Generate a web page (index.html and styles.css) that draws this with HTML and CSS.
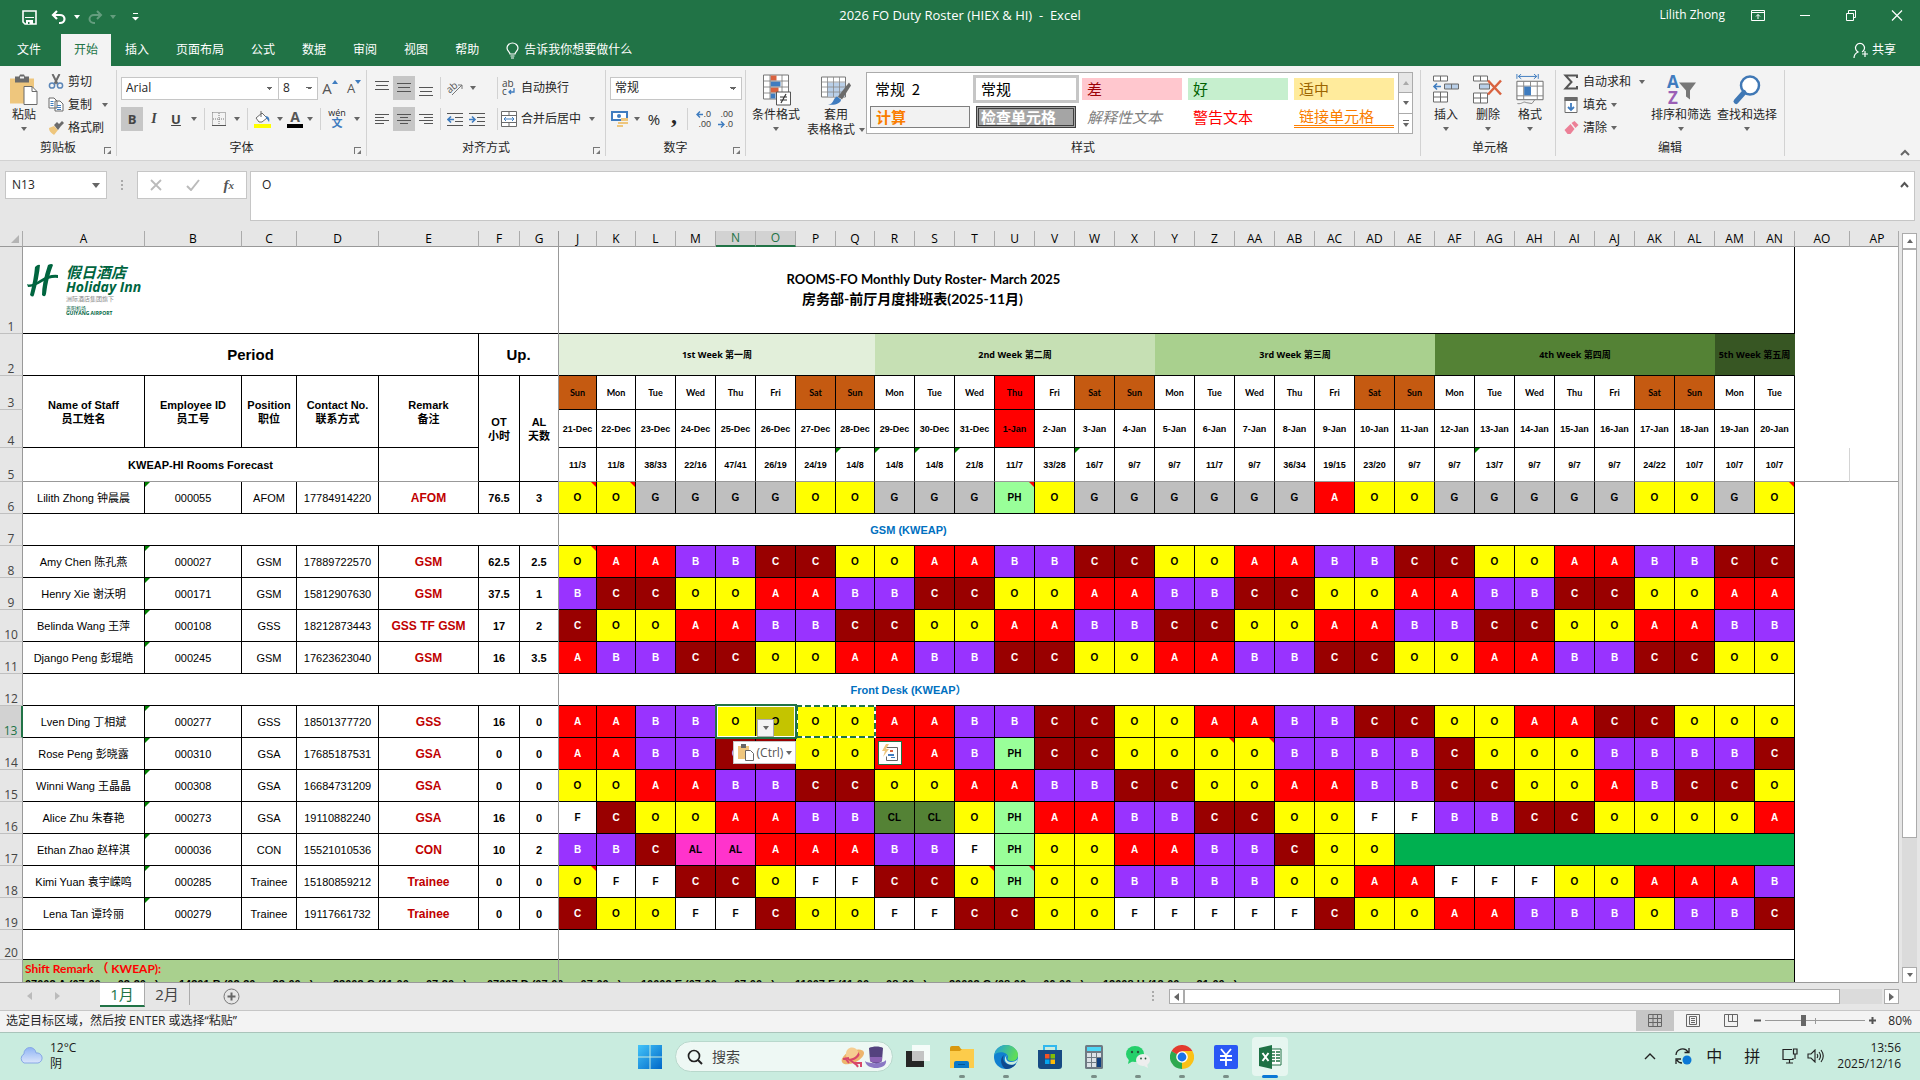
FILE: index.html
```html
<!DOCTYPE html>
<html lang="zh-CN">
<head>
<meta charset="utf-8">
<title>2026 FO Duty Roster (HIEX &amp; HI) - Excel</title>
<link rel="stylesheet" href="styles.css">
</head>
<body>
<header class="titlebar">
  <div class="quick">
    <button class="tb" aria-label="保存"><svg width="15" height="15" viewBox="0 0 15 15"><path d="M1 1h13v13H3l-2-2z" fill="none" stroke="#fff" stroke-width="1.6"/><path d="M3 8h9v-1H3zM4 10h7v4H4z" fill="#fff"/><path d="M6 12h1.500v2H6z" fill="#217346"/></svg></button>
    <button class="tb" aria-label="撤消"><svg width="16" height="15" viewBox="0 0 16 15"><path d="M2 5h7a4.500 4 0 0 1 0 8H8M6 1L2 5l4 4" fill="none" stroke="#fff" stroke-width="2.200"/></svg></button>
    <i class="dd white"></i>
    <button class="tb dim" aria-label="恢复"><svg width="16" height="15" viewBox="0 0 16 15"><path d="M14 5H7a4.500 4 0 0 0 0 8h1M10 1l4 4-4 4" fill="none" stroke="#fff" stroke-width="2"/></svg></button>
    <i class="dd white dim"></i>
    <button class="tb custom" aria-label="自定义"><svg width="7" height="8" viewBox="0 0 7 8"><path d="M1 .5h5" stroke="#fff"/><path d="M0 4h7L3.500 7.500z" fill="#fff"/></svg></button>
  </div>
  <h1>2026 FO Duty Roster (HIEX &amp; HI)&nbsp; -&nbsp; Excel</h1>
  <div class="wins">
    <span class="user">Lilith Zhong</span>
    <button class="tb" aria-label="功能区显示选项"><svg width="14" height="11" viewBox="0 0 14 11"><path d="M.5.5h13v10H.5zM.5 2.500h13M7 9V4.500M5 6.500l2-2 2 2" fill="none" stroke="#fff"/></svg></button>
    <button class="tb" aria-label="最小化"><svg width="12" height="11" viewBox="0 0 12 11"><path d="M1 5.500h10" stroke="#fff"/></svg></button>
    <button class="tb" aria-label="还原"><svg width="12" height="11" viewBox="0 0 12 11"><path d="M1.500 3.500h7v7h-7zM3.500 3V.5h7v7H9" fill="none" stroke="#fff"/></svg></button>
    <button class="tb" aria-label="关闭"><svg width="12" height="11" viewBox="0 0 12 11"><path d="M1 .5l10 10M11 .5l-10 10" stroke="#fff" stroke-width="1.200"/></svg></button>
  </div>
</header>
<nav class="tabs">
  <a href="#" class="file">文件</a><a href="#" class="on">开始</a><a href="#">插入</a><a href="#">页面布局</a><a href="#">公式</a><a href="#">数据</a><a href="#">审阅</a><a href="#">视图</a><a href="#">帮助</a>
  <a href="#" class="tell"><svg width="13" height="17" viewBox="0 0 13 17"><path d="M4 12c0-2-3-3-3-6a5.500 5 0 0 1 11 0c0 3-3 4-3 6zM4.500 14h4M5 16h3" fill="none" stroke="#fff" stroke-width="1.200"/></svg>告诉我你想要做什么</a>
  <a href="#" class="share"><svg width="16" height="17" viewBox="0 0 16 17"><path d="M1 16c0-4 2-5 4-6a4.500 4.500 0 1 1 4 0M9 12h6M12 9v6" fill="none" stroke="#fff" stroke-width="1.200"/></svg>共享</a>
</nav>

<section class="ribbon">
  <div class="group clip">
    <div class="gbody">
      <button class="big paste"><svg width="30" height="31" viewBox="0 0 30 31"><path d="M1 4h24v25H1z" fill="#eec67d"/><path d="M6 2h4l1-2h4l1 2h4v6H6z" fill="#6b6b6b"/><path d="M11 3h4" stroke="#f3f3f3" stroke-width="2"/><path d="M15 12h8l5 5v13H15z" fill="#fff" stroke="#6b6b6b"/><path d="M23 12v5h5" fill="none" stroke="#6b6b6b"/></svg>粘贴<i class="dd"></i></button>
      <div class="stack">
        <button class="sm"><svg width="15" height="15" viewBox="0 0 15 15"><path d="M4 0l5 10M11 0L6 10" stroke="#6b6b6b" stroke-width="2"/><circle cx="3.500" cy="11.500" r="2.600" fill="none" stroke="#5b86b8" stroke-width="1.500"/><circle cx="11.500" cy="11.500" r="2.600" fill="none" stroke="#5b86b8" stroke-width="1.500"/></svg>剪切</button>
        <button class="sm"><svg width="16" height="15" viewBox="0 0 16 15"><path d="M1 1h5l3 3v7H1zM7 4h5l3 3v7H7z" fill="#fff" stroke="#6b6b6b"/><path d="M2.500 4.500h3M2.500 6.500h3M2.500 8.500h3M9 8.500h4M9 10.500h4M9 12.500h4" stroke="#3f7cbf"/></svg>复制 <i class="dd far"></i></button>
        <button class="sm"><svg width="16" height="14" viewBox="0 0 16 14"><path d="M1 7l5-2 4 4-4 5C4 12 1 11 1 7z" fill="#eec67d"/><path d="M6 4l3-3 2 2 3-3 2 2-3 3-3 4z" fill="#6b6b6b"/></svg>格式刷</button>
      </div>
    </div>
    <div class="glabel">剪贴板<i class="launch"></i></div>
  </div>

  <div class="group font">
    <div class="gbody rows">
      <div class="row">
        <select class="fname" aria-label="字体"><option>Arial</option></select><select class="fsize" aria-label="字号"><option>8</option></select>
        <button class="ic up" aria-label="增大字号">A<i class="tri"></i></button>
        <button class="ic dn" aria-label="减小字号">A<i class="tri"></i></button>
      </div>
      <div class="row">
        <button class="ic press b" aria-label="加粗">B</button>
        <button class="ic i" aria-label="倾斜">I</button>
        <button class="ic u" aria-label="下划线">U</button><i class="dd"></i>
        <i class="sep"></i>
        <button class="ic" aria-label="边框"><svg width="14" height="14" viewBox="0 0 14 14"><path d="M.5.5h13v13M.5.5v13M7 1v12M1 7h12" fill="none" stroke="#777" stroke-dasharray="1 1"/><path d="M0 13.500h14" stroke="#555"/></svg></button><i class="dd"></i>
        <i class="sep"></i>
        <button class="ic" aria-label="填充颜色"><svg width="17" height="17" viewBox="0 0 17 17"><path d="M2 7l6-5 5 5-5 4H5z" fill="#fff" stroke="#6b6b6b"/><path d="M7 0v6" stroke="#6b6b6b"/><path d="M11 5c4 0 5 3 4 6l-2-3z" fill="#3f7cbf"/><path d="M0 13h17v4H0z" fill="#ff0"/></svg></button><i class="dd"></i>
        <button class="ic fc" aria-label="字体颜色">A</button><i class="dd"></i>
        <i class="sep"></i>
        <button class="ic wen" aria-label="拼音">wén<b>文</b></button><i class="dd"></i>
      </div>
    </div>
    <div class="glabel">字体<i class="launch"></i></div>
  </div>

  <div class="group align">
    <div class="gbody rows">
      <div class="row">
        <button class="ic" aria-label="顶端对齐"><svg class="al top" width="14" height="16"><path d="M0 1.500h14M1 5.500h12M0 9.500h14"/></svg></button>
        <button class="ic press" aria-label="垂直居中"><svg class="al" width="14" height="16"><path d="M0 3.500h14M1 7.500h12M0 11.500h14"/></svg></button>
        <button class="ic" aria-label="底端对齐"><svg class="al" width="14" height="16"><path d="M0 7.500h14M1 11.500h12M0 15.500h14"/></svg></button>
        <i class="sep"></i>
        <button class="ic" aria-label="方向"><svg width="17" height="16" viewBox="0 0 17 16"><text x="0" y="11" font-size="10" transform="rotate(-40 5 9)" fill="#555">ab</text><path d="M5 15L15 5M11 5h4v4" fill="none" stroke="#777"/></svg></button><i class="dd"></i>
        <i class="sep tall"></i>
        <button class="sm wide"><svg width="16" height="16" viewBox="0 0 16 16"><text x="1" y="7" font-size="10" fill="#444">ab</text><text x="1" y="15" font-size="10" fill="#444">c</text><path d="M13 8v4H8M10 10l-2 2 2 2" fill="none" stroke="#3f7cbf" stroke-width="1.300"/></svg>自动换行</button>
      </div>
      <div class="row">
        <button class="ic" aria-label="左对齐"><svg class="al" width="14" height="12"><path d="M0 1.500h14M0 4.500h9M0 7.500h14M0 10.500h9"/></svg></button>
        <button class="ic press" aria-label="居中"><svg class="al" width="14" height="12"><path d="M0 1.500h14M3 4.500h8M0 7.500h14M3 10.500h8"/></svg></button>
        <button class="ic" aria-label="右对齐"><svg class="al" width="14" height="12"><path d="M0 1.500h14M5 4.500h9M0 7.500h14M5 10.500h9"/></svg></button>
        <i class="sep"></i>
        <button class="ic" aria-label="减少缩进"><svg class="al" width="16" height="13"><path d="M0 .5h16M8 4.500h8M8 8.500h8M0 12.500h16"/><path class="mv" d="M1 6.500h6M4 3.500l-3 3 3 3"/></svg></button>
        <button class="ic" aria-label="增加缩进"><svg class="al" width="16" height="13"><path d="M0 .5h16M8 4.500h8M8 8.500h8M0 12.500h16"/><path class="mv" d="M0 6.500h6M3 3.500l3 3-3 3"/></svg></button>
        <i class="sep tall"></i>
        <button class="sm wide"><svg width="16" height="16" viewBox="0 0 16 16"><path d="M.5.500h15v15H.5zM.5 4.500h15M.5 11.500h15M8 .5v4M8 11.500v4" fill="#fff" stroke="#6b6b6b"/><path d="M3 8h10M5 6L3 8l2 2M11 6l2 2-2 2" fill="none" stroke="#3f7cbf"/></svg>合并后居中<i class="dd far"></i></button>
      </div>
    </div>
    <div class="glabel">对齐方式<i class="launch"></i></div>
  </div>

  <div class="group number">
    <div class="gbody rows">
      <div class="row"><select class="nfmt" aria-label="数字格式"><option>常规</option></select></div>
      <div class="row">
        <button class="ic" aria-label="会计格式"><svg width="18" height="17" viewBox="0 0 18 17"><path d="M1 1h15v8H1z" fill="#fff" stroke="#3f7cbf" stroke-width="2"/><circle cx="8" cy="5" r="2" fill="#3f7cbf"/><path d="M10 7h7v3h-7zM7 11h7v2H7zM6 14h6v2H6zM11 11h6v2h-6z" fill="#eec67d"/></svg></button><i class="dd"></i>
        <button class="ic pct" aria-label="百分比">%</button>
        <button class="ic comma" aria-label="千位分隔">,</button>
        <i class="sep"></i>
        <button class="ic dec" aria-label="增加小数位"><span><svg width="7" height="7" viewBox="0 0 7 7"><path d="M1 3.500h6M4 .5l-3 3 3 3" fill="none" stroke="#3f7cbf" stroke-width="1.400"/></svg>.0</span><span>.00</span></button>
        <button class="ic dec" aria-label="减少小数位"><span>.00</span><span><svg width="7" height="7" viewBox="0 0 7 7"><path d="M0 3.500h6M3 .5l3 3-3 3" fill="none" stroke="#3f7cbf" stroke-width="1.400"/></svg>.0</span></button>
      </div>
    </div>
    <div class="glabel">数字<i class="launch"></i></div>
  </div>

  <div class="group styles">
    <div class="gbody">
      <button class="big cond"><svg width="29" height="31" viewBox="0 0 29 31"><path d="M1.500.5h25v24h-25z" fill="#fff" stroke="#777"/><path d="M8.500 1h6v5h-6zM8.500 13h8v5h-8z" fill="#d9623f"/><path d="M8.500 7h10v5h-10zM8.500 19h5v5h-5z" fill="#3f7cbf"/><path d="M1.500 6.500h25M1.500 12.500h25M1.500 18.500h25M8 .5v24M20 .5v24" stroke="#777" stroke-width=".8"/><path d="M14.500 17.500h14v13h-14z" fill="#fff" stroke="#555"/><path d="M18 22.500h7M18 25.500h7M24 19.500l-5 9" stroke="#333" stroke-width="1.200"/></svg>条件格式<i class="dd"></i></button>
      <button class="big tbl"><svg width="30" height="31" viewBox="0 0 30 31"><path d="M.5 2.500h24v20H.5z" fill="#fff" stroke="#777"/><path d="M6 8h18v14H6z" fill="#b9cfe8"/><path d="M.5 7.500h24M.5 12.500h24M.5 17.500h24M6.500 2.500v20M12.500 2.500v20M18.500 2.500v20" stroke="#888" stroke-width=".8"/><path d="M28 8l2 3-9 14-4-3z" fill="#6b6b6b"/><path d="M7 30c6 0 5-7 9-8l4 3c0 4-6 6-13 5z" fill="#3f7cbf"/></svg>套用<span>表格格式<i class="dd"></i></span></button>
      <div class="gallery">
        <div class="cells">
          <button class="st plain">常规&nbsp; 2</button><button class="st sel">常规</button><button class="st bad">差</button><button class="st good">好</button><button class="st mid">适中</button>
          <button class="st calc">计算</button><button class="st chk">检查单元格</button><button class="st expl">解释性文本</button><button class="st warn">警告文本</button><button class="st lnk">链接单元格</button>
        </div>
        <div class="gscroll"><button aria-label="上"><i class="dd flip"></i></button><button aria-label="下"><i class="dd"></i></button><button aria-label="更多"><i class="bar"></i><i class="dd"></i></button></div>
      </div>
    </div>
    <div class="glabel">样式</div>
  </div>

  <div class="group cellsg">
    <div class="gbody">
      <button class="big c3"><svg width="28" height="31" viewBox="0 0 28 31"><path d="M1.500 1.500h14v5h-14zM8.500 1.500v5M1.500 17.500h14v10h-14zM8.500 17.500v10M1.500 22.500h14" fill="#fff" stroke="#6b6b6b"/><path d="M12.500 9.500h14v5h-14zM19.500 9.500v5" fill="#b9cfe8" stroke="#6b6b6b"/><path d="M2 12h7M5 9l-3 3 3 3" fill="none" stroke="#3f7cbf" stroke-width="1.600"/></svg>插入<i class="dd"></i></button>
      <button class="big c3"><svg width="30" height="31" viewBox="0 0 30 31"><path d="M.5 1.500h14v5H.5zM7.500 1.500v5M.5 18.500h14v10H.5zM7.500 18.500v10M.5 23.500h14" fill="#fff" stroke="#6b6b6b"/><path d="M6.500 9.500h10v5h-10z" fill="#b9cfe8" stroke="#6b6b6b"/><path d="M15 6l13 14M28 6L15 20" stroke="#d9623f" stroke-width="2.500"/></svg>删除<i class="dd"></i></button>
      <button class="big c3"><svg width="30" height="33" viewBox="0 0 30 33"><path d="M1.500 0v5M23.500 0v5M3 2.500h19M6 0L3 2.500 6 5M19 0l3 2.500L19 5" fill="none" stroke="#3f7cbf"/><path d="M1.500 7.500h27v19h-27z" fill="#fff" stroke="#6b6b6b"/><path d="M1.500 12.500h27M1.500 22.500h27M8.500 7.500v19M15.500 7.500v5M22.500 7.500v19M2 30.500c5 1 6-3 9-1l6 1 3-4" fill="none" stroke="#888"/><path d="M9 13h7v9H9z" fill="#3f7cbf"/></svg>格式<i class="dd"></i></button>
    </div>
    <div class="glabel">单元格</div>
  </div>

  <div class="group edit">
    <div class="gbody">
      <div class="stack">
        <button class="sm"><svg width="15" height="16" viewBox="0 0 15 16"><path d="M13.500 4V1.500H2L8 8l-6 6.500h11.500V12" fill="none" stroke="#555" stroke-width="2"/></svg>自动求和 <i class="dd far"></i></button>
        <button class="sm"><svg width="15" height="16" viewBox="0 0 15 16"><path d="M1.500.5h12v15h-12z" fill="#fff" stroke="#6b6b6b"/><path d="M1 0h13v4H1z" fill="#6b6b6b"/><path d="M7.500 6v7M4.500 10l3 3 3-3" fill="none" stroke="#3f7cbf" stroke-width="1.800"/></svg>填充<i class="dd"></i></button>
        <button class="sm"><svg width="15" height="14" viewBox="0 0 15 14"><path d="M8 2l3-2 4 4-3 3z" fill="#ec8097"/><path d="M7 3l4 5-4 5H4L1 9z" fill="#ec8097"/></svg>清除<i class="dd"></i></button>
      </div>
      <button class="big e2"><svg width="31" height="31" viewBox="0 0 31 31"><text x="1" y="13" font-size="17" font-weight="bold" fill="#3f7cbf">A</text><text x="2" y="29" font-size="17" font-weight="bold" fill="#9b5fb5">Z</text><path d="M13 8h17l-6 8v9l-4-3v-6z" fill="#777"/></svg>排序和筛选<i class="dd"></i></button>
      <button class="big e2"><svg width="30" height="31" viewBox="0 0 30 31"><circle cx="18" cy="11" r="9" fill="#fff" stroke="#4078b5" stroke-width="2.500"/><path d="M12 18L4 27" stroke="#4078b5" stroke-width="5" stroke-linecap="round"/></svg>查找和选择<i class="dd"></i></button>
    </div>
    <div class="glabel">编辑</div>
  </div>
  <button class="collapse" aria-label="折叠功能区"><svg width="10" height="7" viewBox="0 0 10 7"><path d="M1 6l4-4 4 4" fill="none" stroke="#666" stroke-width="2"/></svg></button>
</section>

<section class="fbar">
  <div class="namebox"><input value="N13" aria-label="名称框"><i class="dd big-dd"></i></div>
  <i class="dots"></i>
  <div class="fbtns">
    <button aria-label="取消"><svg width="12" height="12"><path d="M1 1l10 10M11 1L1 11" stroke="#bbb" stroke-width="1.800"/></svg></button>
    <button aria-label="输入"><svg width="14" height="12"><path d="M1 7l4 4 8-10" fill="none" stroke="#bbb" stroke-width="2"/></svg></button>
    <button class="fx" aria-label="插入函数">f<small>x</small></button>
  </div>
  <div class="formula"><textarea aria-label="编辑栏">O</textarea><svg width="9" height="7" viewBox="0 0 9 7"><path d="M1 6l3.500-4L8 6" fill="none" stroke="#555" stroke-width="2"/></svg></div>
</section>

<main class="sheet">
  <div class="pane">
    <table id="roster" aria-label="Duty Roster"></table>
    <div class="freeze"></div>
    <div class="logo">
      <svg width="32" height="34" viewBox="0 0 32 34"><path d="M8 3q3-3 5-2-1 12-6 30-1 3-4 0Q7 15 8 3zM21 1q4-2 5 0-5 12-7 29-1 4-4 1 0-12 6-30z" fill="#00653f"/><path d="M0 20q4 2 13-4t18-5v3q-8-1-16 4T1 23z" fill="#00653f"/></svg>
      <div><b class="cn">假日酒店</b><b class="en">Holiday Inn</b><span class="g">洲际酒店集团旗下</span><span class="p">贵阳机场</span><b class="p">GUIYANG AIRPORT</b></div>
    </div>
  </div>
  <div class="vscroll"><button aria-label="上"><i class="dd flip"></i></button><div class="track"><i class="thumb"></i></div><button aria-label="下"><i class="dd"></i></button></div>
</main>

<section class="sheetbar">
  <button class="nav" aria-label="上一张"><svg width="5" height="8"><path d="M5 0v8L0 4z" fill="#bbb"/></svg></button>
  <button class="nav" aria-label="下一张"><svg width="5" height="8"><path d="M0 0v8l5-4z" fill="#bbb"/></svg></button>
  <a href="#" class="stab on">1月</a><a href="#" class="stab">2月</a>
  <button class="add" aria-label="新工作表"><svg width="17" height="17" viewBox="0 0 17 17"><circle cx="8.500" cy="8.500" r="7.500" fill="none" stroke="#777"/><path d="M8.500 4.500v8M4.500 8.500h8" stroke="#666" stroke-width="2"/></svg></button>
  <i class="dots"></i>
  <div class="hscroll"><button aria-label="左"><svg width="5" height="8"><path d="M5 0v8L0 4z" fill="#666"/></svg></button><div class="track"><i class="thumb"></i></div><button aria-label="右"><svg width="5" height="8"><path d="M0 0v8l5-4z" fill="#666"/></svg></button></div>
</section>

<footer class="status">
  <span>选定目标区域，然后按 ENTER 或选择“粘贴”</span>
  <div class="views">
    <button class="on" aria-label="普通"><svg width="14" height="13"><path d="M.5.5h13v12H.5zM.5 4.500h13M.5 8.500h13M5 .5v12M9.500 .5v12" fill="none" stroke="#666"/></svg></button>
    <button aria-label="页面布局"><svg width="14" height="13"><path d="M.5.5h13v12H.5zM3.500 2.500h7v8h-7zM5 4.500h4M5 6.500h4M5 8.500h4" fill="none" stroke="#666"/></svg></button>
    <button aria-label="分页预览"><svg width="14" height="13"><path d="M.5.5h13v12H.5zM4.500 .5v7h4v-7M4.500 7.500h9" fill="none" stroke="#666"/></svg></button>
  </div>
  <button class="zm" aria-label="缩小"><svg width="7" height="9"><path d="M0 4.500h7" stroke="#555" stroke-width="2"/></svg></button>
  <input class="zoom" type="range" min="0" max="100" value="38" aria-label="缩放">
  <button class="zm" aria-label="放大"><svg width="7" height="9"><path d="M0 4.500h7M3.500 1v7" stroke="#555" stroke-width="2"/></svg></button>
  <span class="pc">80%</span>
</footer>

<section class="taskbar">
  <div class="weather"><svg width="24" height="17" viewBox="0 0 24 17"><defs><linearGradient id="cl" x1="0" y1="0" x2="0" y2="1"><stop offset="0" stop-color="#8fb4f4"/><stop offset="1" stop-color="#dbe6fb"/></linearGradient></defs><path d="M5 16a5 5 0 0 1 0-9 6 6 0 0 1 12-1 5 5 0 0 1 2 10z" fill="url(#cl)" stroke="#86a7e6"/></svg><p>12°C<br>阴</p></div>
  <div class="apps">
    <button aria-label="开始"><svg width="24" height="24"><defs><linearGradient id="w" x1="0" y1="0" x2="1" y2="1"><stop offset="0" stop-color="#43c4f9"/><stop offset="1" stop-color="#0067c8"/></linearGradient></defs><path d="M0 0h11.500v11.500H0zM12.500 0H24v11.500H12.500zM0 12.500h11.500V24H0zM12.500 12.500H24V24H12.500z" fill="url(#w)"/></svg></button>
    <label class="search"><svg width="16" height="16" viewBox="0 0 16 16"><circle cx="7" cy="7" r="5.500" fill="none" stroke="#222" stroke-width="1.700"/><path d="M11 11l4 4" stroke="#222" stroke-width="2"/></svg><input placeholder="搜索" aria-label="搜索">
      <svg width="46" height="24" viewBox="0 0 46 24"><g transform="rotate(-25 11 10)"><ellipse cx="11" cy="12" rx="12" ry="6" fill="#edb56d"/><path d="M5 11c0-11 13-11 13-1-3 4-9 4-13 1z" fill="#f6cd91"/><path d="M5 11c3 3 10 3 13-1v3c-3 3-10 3-13 0z" fill="#d8486a"/></g><path d="M4 13l4 5M2 14l6-1M9 15l8 6M17 22l-3-4 6 0 0 4" stroke="#d8486a" stroke-width="2" fill="none"/><path d="M24 16c3 3 18 3 21-1 1 6-5 8-10 8s-10-2-11-7z" fill="#8b78c4"/><path d="M28 3c4-2 11-2 14 0l-1 13c-3 3-9 3-12 0z" fill="#54427e"/><path d="M29 12h12v4c-3 2-9 2-12 0z" fill="#8b63b4"/></svg></label>
    <button aria-label="任务视图"><svg width="24" height="23"><path d="M0 6h18v16H0z" fill="#262626"/><path d="M6 0h18v16H6z" fill="#fff" opacity=".82"/><path d="M6 6h12v10H6z" fill="#c4c4c4"/></svg></button>
    <button class="run" aria-label="文件资源管理器"><svg width="24" height="22"><path d="M0 2q0-2 2-2h7l2 3h11q2 0 2 2v6H0z" fill="#d9980f"/><path d="M0 5h10l2-2h12v19H0z" fill="#fccc4b"/><path d="M4 22v-5q0-2 2-2h11q2 0 2 2v5z" fill="#0c78c8"/><path d="M8 18.500h7" stroke="#045596"/></svg></button>
    <button class="run" aria-label="Edge"><svg width="24" height="24" viewBox="0 0 24 24"><defs><linearGradient id="e1" x1="0" y1="0" x2="1" y2=".3"><stop offset="0" stop-color="#1d9be3"/><stop offset="1" stop-color="#5fdc59"/></linearGradient></defs><circle cx="12" cy="12" r="12" fill="#1080d0"/><path d="M0 11C1 4 6 0 12 0c7 0 12 5 12 10 0 4-3 6-6 6-4 0-5-2-4-4C14 7 3 5 0 11z" fill="url(#e1)"/><path d="M10 10c-3 6 3 12 12 9-3 4-7 5-10 5C7 22 5 13 10 10z" fill="#114a8e"/><path d="M13 10c-2 2-1 7 4 7 3 0 5-1 7-3-1 5-6 7-10 5-4-2-4-7-1-9z" fill="#c9ecdf"/></svg></button>
    <button aria-label="Microsoft Store"><svg width="24" height="24"><path d="M6 5V1h12v4" fill="none" stroke="#31b8ee" stroke-width="2"/><path d="M0 5h24v16q0 3-3 3H3q-3 0-3-3z" fill="#164a83"/><path d="M7 9h4.500v4.500H7z" fill="#f35325"/><path d="M12.500 9H17v4.500h-4.500z" fill="#81bc06"/><path d="M7 14.500h4.500V19H7z" fill="#05a6f0"/><path d="M12.500 14.500H17V19h-4.500z" fill="#ffba08"/></svg></button>
    <button class="run" aria-label="计算器"><svg width="18" height="24"><rect width="18" height="24" rx="1.500" fill="#6e7a83"/><path d="M2 2h14v4H2z" fill="#4dd6f5"/><path d="M2 8h4v4H2zM7 8h4v4H7zM12 8h4v4h-4zM2 13h4v4H2zM7 13h4v4H7zM2 18h4v4H2zM7 18h4v4H7z" fill="#dbe1e6"/><path d="M12 13h4v9h-4z" fill="#103f80"/></svg></button>
    <button class="run" aria-label="微信"><svg width="24" height="22"><ellipse cx="9" cy="8" rx="9" ry="8" fill="#25cf6b"/><path d="M3 13l-1 5 5-3z" fill="#25cf6b"/><ellipse cx="17" cy="14" rx="7" ry="6" fill="#eee"/><path d="M21 18l1 4-4-2z" fill="#eee"/><g fill="#26543a"><circle cx="6" cy="6" r="1.200"/><circle cx="12" cy="6" r="1.200"/><circle cx="15" cy="12.500" r=".9"/><circle cx="19.500" cy="12.500" r=".9"/></g></svg></button>
    <button class="run" aria-label="Chrome"><svg width="24" height="24" viewBox="0 0 24 24"><path d="M12 12L1.600 6A12 12 0 0 1 22.400 6z" fill="#e33b2e"/><path d="M12 12h-.1L22.400 6A12 12 0 0 1 12 24z" fill="#fbc116"/><path d="M12 12v12A12 12 0 0 1 1.600 6z" fill="#2da94f"/><path d="M12 6h10.400l-6 8z" fill="#fbc116"/><path d="M1.600 6h10.400v6z" fill="#e33b2e"/><circle cx="12" cy="12" r="5.800" fill="#fff"/><circle cx="12" cy="12" r="4.400" fill="#1a73e8"/></svg></button>
    <button class="run" aria-label="支付"><svg width="24" height="24"><rect width="24" height="24" rx="2" fill="#2a57f5"/><path d="M7 4l5 6 5-6M12 10v11M6 11h12M6 15h12" fill="none" stroke="#fff" stroke-width="1.800"/></svg></button>
    <button class="run cur" aria-label="Excel"><svg width="24" height="24"><path d="M12 4h11v16H12z" fill="#fff" stroke="#217346"/><path d="M14 7h3M18 7h4M14 10h3M18 10h4M14 13h3M18 13h4M14 16h3M18 16h4" stroke="#217346" stroke-width="1.500"/><path d="M1 3l13-3v24L1 21z" fill="#1e7145"/><path d="M4.500 8l6 8M10.500 8l-6 8" stroke="#fff" stroke-width="2"/></svg></button>
  </div>
  <div class="tray">
    <svg width="12" height="8"><path d="M1 7l5-5 5 5" fill="none" stroke="#222" stroke-width="1.400"/></svg>
    <svg class="sync" width="18" height="18" viewBox="0 0 18 18"><path d="M2 8a6.500 6.500 0 0 1 12-3M15 1v4.500h-4.500M2 17v-5h5M3 13c1 2 3 3 5 3" fill="none" stroke="#222" stroke-width="1.300"/><circle cx="13" cy="13" r="4.500" fill="#0a78d6"/></svg>
    <span class="ime">中</span><span class="ime">拼</span>
    <svg class="mon" width="16" height="16" viewBox="0 0 16 16"><path d="M10 1.500H1v10h10V10M4 15h7M7.500 12v3M11.500 1h3.500v5h-3.500zM13 6v5" fill="none" stroke="#222" stroke-width="1.200"/></svg>
    <svg class="spk" width="17" height="14" viewBox="0 0 17 14"><path d="M1 5h3l4-4v12L4 9H1zM10 5q1.500 2 0 4M12 3q3 4 0 8M14 1q4.500 6 0 12" fill="none" stroke="#222" stroke-width="1.100"/></svg>
    <p>13:56<br>2025/12/16</p>
  </div>
</section>
<script src="roster.js"></script>
</body>
</html>
```
FILE: styles.css
```css
* { box-sizing: border-box; }
body {
  margin: 0;
  height: 100vh;
  display: flex;
  flex-direction: column;
  overflow: hidden;
  background: #e6e6e6;
  color: #262626;
  font: 12px/16px "Open Sans", "Noto Sans CJK SC", sans-serif;
}
button, input, select, textarea { font: inherit; color: inherit; }
button { border: 0; padding: 0; background: none; display: flex; align-items: center; justify-content: center; white-space: nowrap; }
a { color: inherit; text-decoration: none; }
svg { flex: none; display: block; }
i { font-style: normal; }
p { margin: 0; }

.dd { flex: none; width: 0; height: 0; border: 3px solid transparent; border-top: 4px solid #666; border-bottom: 0; }
.dd.white { border-top-color: #fff; }
.dd.flip { border-top: 0; border-bottom: 4px solid #aaa; }
.big-dd { border-width: 4px; border-top-width: 5px; border-bottom: 0; }
.dim { opacity: .3; }

/* title bar */
.titlebar { flex: none; height: 34px; display: grid; grid-template-columns: 1fr auto 1fr; align-items: center; background: #217346; color: #fff; }
.titlebar h1 { margin: 0; padding-bottom: 4px; font: inherit; font-size: 13px; }
.quick { display: flex; align-items: center; padding-left: 22px; gap: 7px; }
.quick .tb:nth-child(2) { margin-left: 7px; }
.quick .custom { margin-left: 9px; }
.wins { display: flex; align-items: center; justify-content: flex-end; gap: 34px; padding: 0 17px 4px 0; }
.user { margin-right: -8px; }

/* ribbon tabs */
.tabs { flex: none; height: 32px; display: flex; gap: 1px; padding-left: 4px; background: #217346; color: #fff; }
.tabs a { display: flex; align-items: center; padding: 0 13px; }
.tabs .file { margin-right: 6px; }
.tabs .on { background: #f3f3f3; color: #217346; }
.tabs .tell { gap: 5px; }
.tabs .share { margin-left: auto; gap: 3px; padding-right: 24px; }

/* ribbon */
.ribbon { flex: none; height: 95px; display: flex; position: relative; background: #f3f3f3; border-bottom: 1px solid #d2d2d2; padding-top: 4px; }
.group { height: 86px; border-right: 1px solid #d2d2d2; display: flex; flex-direction: column; }
.gbody { height: 71px; display: flex; }
.glabel { position: relative; text-align: center; line-height: 17px; }
.launch { position: absolute; right: 5px; bottom: 2px; width: 7px; height: 7px; border: solid #777; border-width: 1px 0 0 1px; }
.launch::after { content: ""; position: absolute; right: 0; bottom: 0; border: 2px solid transparent; border-right-color: #777; border-bottom-color: #777; }
.big { flex-direction: column; justify-content: flex-start; padding-top: 4px; }
.big svg { margin-bottom: 1px; height: 32px; }
.big .dd { margin-top: 4px; }
.big span { display: flex; align-items: center; gap: 4px; line-height: 14px; }
.big span .dd { margin-top: 0; }
.stack { display: flex; flex-direction: column; align-items: flex-start; }
.sm { height: 23px; gap: 4px; }
.sm svg { width: 16px; }
.sm .far { margin-left: 4px; }
.rows { flex-direction: column; padding: 6px 0 0 4px; gap: 7px; }
.row { height: 24px; display: flex; align-items: center; }
.ic { min-width: 22px; height: 24px; }
.press { background: #c6c6c6; }
.sep { width: 1px; height: 22px; background: #d2d2d2; }
.row > .dd { margin: 0 4px; }
.row > .sep { margin: 0 3px; }
.al { fill: none; stroke: #555; }
.mv { stroke: #3f7cbf; stroke-width: 1.6px; }

.clip { width: 117px; }
.clip .paste { width: 48px; }
.clip .far { margin-left: 6px; }
.font { width: 250px; }
select {
  appearance: none; height: 23px; padding: 0 4px; border: 1px solid #c6c6c6; border-radius: 0;
  background: linear-gradient(45deg, transparent 50%, #666 50%) no-repeat right 8px center / 3px 3px, linear-gradient(135deg, #666 50%, transparent 50%) no-repeat right 5px center / 3px 3px, #fff;
}
.fname { width: 158px; }
.fsize { width: 40px; margin-left: -1px; }
.nfmt { width: 132px; }
.up, .dn { position: relative; font-size: 15px; width: 24px; color: #555; }
.dn { font-size: 13px; }
.up .tri, .dn .tri { border: 3px solid transparent; border-top: 0; border-bottom: 4px solid #3f7cbf; align-self: flex-start; margin-top: 4px; }
.dn .tri { border-bottom: 0; border-top: 4px solid #3f7cbf; }
.b { font-weight: bold; font-size: 13px; color: #444; }
.i { font: italic bold 14px "Liberation Serif", serif; color: #444; }
.u { font-weight: bold; font-size: 13px; text-decoration: underline; color: #444; }
.fc { font-size: 14px; line-height: 14px; font-weight: bold; color: #555; }
.ic.fc { height: 18px; min-width: 16px; border-bottom: 4px solid #000; }
.wen { flex-direction: column; width: 26px; font-size: 9px; line-height: 8px; }
.wen b { font-size: 11px; line-height: 12px; color: #3f7cbf; }
.align { width: 239px; }
.align .tall { margin-left: auto; }
.align .wide { width: 104px; justify-content: flex-start; }
.number { width: 140px; }
.number .ic { min-width: 20px; }
.pct { font-size: 15px; }
.comma { font: bold 24px/10px "Liberation Serif", serif; padding-bottom: 8px; }
.number .dec { width: 22px; flex-direction: column; font: 9px/10px "Liberation Sans", sans-serif; color: #444; }
.dec span { align-self: flex-end; display: flex; align-items: center; padding-right: 2px; }
.styles { width: 675px; }
.cond { width: 60px; }
.tbl { width: 60px; }
.gallery { height: 62px; margin-top: 2px; display: flex; border: 1px solid #ababab; background: #fff; }
.cells { display: grid; grid-template-columns: repeat(5, 100px); gap: 6px; padding: 5px 4px 5px 3px; }
.st { height: 22px; justify-content: flex-start; padding-left: 5px; font: 15px/20px "Noto Sans CJK SC", sans-serif; color: #000; }
.sel { outline: 3px solid #c6c6c6; }
.bad { background: #ffc7ce; color: #9c0006; }
.good { background: #c6efce; color: #006100; }
.mid { background: #ffeb9c; color: #9c6500; }
.calc { background: #f2f2f2; color: #fa7d00; border: 1px solid #7f7f7f; font-weight: bold; }
.chk { background: #a5a5a5; color: #fff; border: 3px double #3f3f3f; padding-left: 2px; font-weight: bold; }
.expl { color: #7f7f7f; font-style: italic; }
.warn { color: #f00; }
.lnk { color: #fa7d00; border-bottom: 3px double #ff8001; }
.gscroll { display: flex; flex-direction: column; width: 14px; }
.gscroll button { flex: 1; flex-direction: column; gap: 2px; border-left: 1px solid #ababab; }
.gscroll button + button { border-top: 1px solid #ababab; }
.gscroll button:first-child { background: #e6e6e6; }
.bar { width: 6px; height: 1px; background: #666; }
.cellsg { width: 135px; padding-left: 4px; }
.c3 { width: 42px; }
.edit { width: 229px; }
.edit .stack { width: 92px; padding-left: 7px; }
.e2 { width: 66px; }
.collapse { position: absolute; right: 10px; bottom: 4px; }

/* formula bar */
.fbar { flex: none; height: 70px; display: flex; align-items: flex-start; padding: 10px 5px 0; }
.namebox { width: 102px; height: 28px; display: flex; align-items: center; padding-right: 6px; background: #fff; border: 1px solid #c6c6c6; }
.namebox input { width: 80px; flex: 1; border: 0; background: none; padding: 0 6px; outline: 0; }
.dots { width: 2px; height: 10px; background: repeating-linear-gradient(#aaa 0 2px, transparent 2px 4px); }
.fbar .dots { margin: 9px 14px 0; }
.fbtns { width: 110px; height: 28px; display: flex; justify-content: space-around; background: #fff; border: 1px solid #c6c6c6; }
.fx { font: italic bold 15px "Liberation Serif", serif; color: #555; }
.fx small { font-size: 11px; }
.formula { flex: 1; height: 50px; margin-left: 3px; display: flex; padding: 5px 5px 0 11px; background: #fff; border: 1px solid #c6c6c6; }
.formula textarea { flex: 1; height: 40px; resize: none; border: 0; padding: 0; outline: 0; background: none; }
.formula svg { margin-top: 4px; }

/* worksheet */
.sheet { flex: 1; min-height: 0; display: flex; }
.pane { flex: 1; position: relative; overflow: hidden; background: #fff; border-right: 1px solid #ababab; border-bottom: 1px solid #999; }
#roster { border-collapse: separate; border-spacing: 0; table-layout: fixed; width: 1904px; font: 11px/14px "Liberation Sans", "Noto Sans CJK SC", sans-serif; color: #000; }
#roster td, #roster th { padding: 0; text-align: center; vertical-align: middle; white-space: nowrap; overflow: hidden; border: solid #000; border-width: 0 1px 1px 0; }
#roster .colhead th { height: 16px; background: #e6e6e6; border-color: #999; border-right-color: #ababab; font: 12px/14px "Open Sans", sans-serif; }
#roster .colhead .hot { background: #d2d2d2; color: #217346; border-bottom: 2px solid #217346; }
#roster .corner { position: relative; }
.corner::after { content: ""; position: absolute; right: 3px; bottom: 3px; border: 4px solid transparent; border-right-color: #b4b4b4; border-bottom-color: #b4b4b4; }
#roster .rn { background: #e6e6e6; border-color: #c0c0c0; border-right-color: #999; vertical-align: bottom; font: 12px/13px "Open Sans", sans-serif; color: #444; }
#roster .rn.hot { background: #d2d2d2; color: #217346; border-right: 2px solid #217346; }
#roster .off { border: 0; }
#roster .r5 .off { border-bottom: 1px solid #999; }
#roster .r5 .ao { border-right: 1px solid #d4d4d4; }
#roster .r5 > :not(.rn) { border-bottom-color: #999; }
#roster .title { padding: 0 0 2px 30px; font: bold 13px/20px Lato, "Noto Sans CJK SC", sans-serif; }
#roster .title span { display: block; margin-right: 22px; font-size: 14px; }
#roster .cap { font-size: 15px; font-weight: bold; }
#roster .wk { border-right: 0; font: bold 9px/12px "Open Sans", "Noto Sans CJK SC", sans-serif; }
#roster .wk5 { border-right: 1px solid #375623; }
.wk1 { background: #e2efda; } .wk2 { background: #c6e0b4; } .wk3 { background: #a9d08e; } .wk4 { background: #548235; } .wk5 { background: #375623; }
#roster .day { font: bold 9px/12px Lato, sans-serif; }
#roster .date, #roster .fc5 { font-weight: bold; font-size: 9px; }
.rest { background: #c55a11; }
.holiday { background: #f00; }
#roster .hd { font-weight: bold; }
#roster .band { color: #0070c0; font-weight: bold; }
#roster .rk { color: #c00000; font-weight: bold; font-size: 12px; }
#roster .nb { font-weight: bold; }
#roster .s { font-weight: bold; font-size: 10px; }
#roster .A, #roster .B, #roster .C { color: #fff; }
.O { background: #ff0; } .A { background: #f00; } .B { background: #93f; } .C { background: #900; }
.G { background: #bfbfbf; } .PH { background: #9f9; } .CL { background: #548235; } .AL { background: #f3c; }
.leave { background: #00b050; }
#roster .note, #roster .err, #roster .host { position: relative; }
.note::after, .err::after { content: ""; position: absolute; top: 0; border: 0 solid transparent; }
.note::after { right: 0; border-width: 0 5px 5px 0; border-right-color: #f00; }
.err::after { left: 0; border-width: 5px 5px 0 0; border-top-color: #008000; }
#roster .host { overflow: visible; }
#roster .shade { background: #c4c400; }
.mark { position: absolute; z-index: 2; left: -1px; top: -2px; width: 82px; height: 35px; border: 2px solid #217346; box-shadow: inset 0 0 0 1px #fff; }
.ants {
  position: absolute; z-index: 1; left: 0; top: -1px; width: 80px; height: 33px;
  background:
    repeating-linear-gradient(90deg, #217346 0 6px, #fff 6px 9px) top / 100% 2px no-repeat,
    repeating-linear-gradient(90deg, #217346 0 6px, #fff 6px 9px) bottom / 100% 2px no-repeat,
    repeating-linear-gradient(#217346 0 6px, #fff 6px 9px) left / 2px 100% no-repeat,
    repeating-linear-gradient(#217346 0 6px, #fff 6px 9px) right / 2px 100% no-repeat;
}
.pick { position: absolute; z-index: 3; left: 1px; top: 13px; width: 17px; height: 18px; background: #f3f3f3; border: 1px solid #ababab; }
.ctrl { position: absolute; z-index: 3; left: 17px; top: 3px; width: 63px; height: 23px; gap: 3px; background: #fff; border: 1px solid #c6c6c6; color: #555; font: 12px/16px "Open Sans", sans-serif; }
.quickan { position: absolute; z-index: 3; left: 3px; top: 3px; width: 24px; height: 24px; background: #fff; border: 1px solid #217346; }
#roster .remark { height: 60px; padding: 1px 2px 0; background: #a9d08e; text-align: left; vertical-align: top; font: bold 11px/15px Lato, "Noto Sans CJK SC", sans-serif; }
.remark em { font-style: normal; font-size: 12px; color: #f00; display: block; }
.remark span { display: inline-block; width: 154px; font: bold 11px/13px "Liberation Sans", sans-serif; }
.freeze { position: absolute; z-index: 4; left: 558px; top: 0; bottom: 0; width: 1px; background: #999; }
.logo { position: absolute; left: 27px; top: 33px; display: flex; gap: 7px; color: #00653f; }
.logo div { display: flex; flex-direction: column; }
.cn { font: italic bold 15px/15px "Noto Sans CJK SC", sans-serif; }
.en { font: italic bold 14px/16px "Open Sans", sans-serif; }
.logo .g { font-size: 6px; line-height: 8px; color: #888; }
.logo .p { font-size: 5px; line-height: 5px; }
.logo span.p { margin-top: 3px; }

.vscroll { flex: none; width: 21px; display: flex; flex-direction: column; align-items: center; padding: 2px 0 0; }
.vscroll button, .hscroll button { flex: none; width: 15px; height: 16px; background: #fff; border: 1px solid #ababab; }
.vscroll .flip { border-bottom-color: #666; }
.vscroll .track { flex: 1; width: 15px; background: #dbdbdb; }
.thumb { display: block; background: #fff; border: 1px solid #ababab; }
.vscroll .thumb { height: 82%; }

/* sheet tabs */
.sheetbar { flex: none; height: 28px; display: flex; align-items: flex-start; border-bottom: 1px solid #c6c6c6; padding-right: 21px; }
.nav { width: 28px; height: 26px; }
.nav:first-child { margin-left: 15px; }
.stab { width: 45px; height: 24px; text-align: center; font-size: 15px; line-height: 22px; color: #444; }
.stab.on { margin-left: 29px; background: #fff; color: #217346; border-bottom: 2px solid #217346; border-right: 1px solid #ababab; }
.stab + .stab { height: 22px; border-right: 1px solid #ababab; }
.add { margin: 5px 0 0 33px; }
.sheetbar .dots { margin: 8px 15px 0 auto; }
.hscroll { width: 730px; height: 15px; margin-top: 6px; display: flex; }
.hscroll button { height: 15px; }
.hscroll .track { flex: 1; background: #dbdbdb; margin-right: 2px; }
.hscroll .thumb { width: 94%; height: 15px; }

/* status bar */
.status { flex: none; height: 22px; display: flex; align-items: center; background: #f3f3f3; border-bottom: 1px solid #a9c4ba; padding: 0 8px 2px 6px; }
.views { margin-left: auto; height: 20px; display: flex; margin-right: 4px; }
.views button { width: 38px; height: 20px; }
.views .on { background: #c6c6c6; }
.zm { width: 7px; }
.zoom { appearance: none; width: 100px; height: 16px; margin: 0 4px; background: linear-gradient(#999, #999) center / 1px 6px no-repeat, linear-gradient(#999, #999) center / 100% 1px no-repeat; }
.zoom::-webkit-slider-thumb { appearance: none; width: 5px; height: 11px; background: #666; }
.pc { width: 36px; text-align: right; }

/* taskbar */
.taskbar { flex: none; height: 47px; display: grid; grid-template-columns: 1fr auto 1fr; align-items: center; background: #c9ecdf; color: #1b1b1b; }
.weather { display: flex; align-items: center; gap: 7px; padding: 0 0 2px 19px; }
.apps { display: flex; align-items: center; }
.apps button { position: relative; width: 44px; height: 44px; }
.run::after { content: ""; position: absolute; bottom: 1px; left: 19px; width: 6px; height: 3px; border-radius: 2px; background: #7a8f88; }
.cur::before { content: ""; position: absolute; left: 4px; top: 2px; width: 36px; height: 39px; border-radius: 4px; background: #e6f6f0; }
.cur svg { position: relative; }
.cur::after { left: 14px; width: 16px; background: #0a78d6; }
.search { width: 218px; height: 31px; margin: 0 3px; display: flex; align-items: center; padding: 0 5px 0 11px; border-radius: 16px; background: #eef8f4; border: 1px solid #b8d8cc; }
.search input { width: 90px; flex: 1; border: 0; background: none; padding: 0 9px; font-size: 14px; outline: 0; }
.search input::placeholder { color: #444; }
.tray { display: flex; align-items: center; justify-content: flex-end; padding: 0 19px 2px 0; }
.sync { margin: 0 14px 0 18px; }
.ime { width: 16px; margin-right: 22px; font-size: 16px; line-height: 20px; }
.spk { margin: 0 13px 0 9px; }
.tray p { text-align: right; }
```
FILE: roster.js
```js
const COLS = ['A','B','C','D','E','F','G','J','K','L','M','N','O','P','Q','R','S','T','U','V','W','X','Y','Z','AA','AB','AC','AD','AE','AF','AG','AH','AI','AJ','AK','AL','AM','AN','AO','AP'];
const WIDTHS = [122, 97, 55, 82, 100, 41, 39, 38, 39, 40, 40, 40, 40, 40, 39];
const DAYS = ['Sun', 'Mon', 'Tue', 'Wed', 'Thu', 'Fri', 'Sat'];
const FORECAST = '11/3 11/8 38/33 22/16 47/41 26/19 24/19 14/8 14/8 14/8 21/8 11/7 33/28 16/7 9/7 9/7 11/7 9/7 36/34 19/15 23/20 9/7 9/7 13/7 9/7 9/7 9/7 24/22 10/7 10/7 10/7'.split(' ');
const CHECKED = [7, 8, 9, 10, 13, 23];
const HOLIDAY = 11;

const STAFF = {
  6: ['Lilith Zhong 钟晨晨', '000055', 'AFOM', '17784914220', 'AFOM', '76.5', '3', 'O O G G G G O O G G G PH O G G G G G G A O O G G G G G O O G O', [0, 1, 11, 30]],
  8: ['Amy Chen 陈孔燕', '000027', 'GSM', '17889722570', 'GSM', '62.5', '2.5', 'O A A B B C C O O A A B B C C O O A A B B C C O O A A B B C C', [0]],
  9: ['Henry Xie 谢沃明', '000171', 'GSM', '15812907630', 'GSM', '37.5', '1', 'B C C O O A A B B C C O O A A B B C C O O A A B B C C O O A A', []],
  10: ['Belinda Wang 王萍', '000108', 'GSS', '18212873443', 'GSS TF GSM', '17', '2', 'C O O A A B B C C O O A A B B C C O O A A B B C C O O A A B B', []],
  11: ['Django Peng 彭琨皓', '000245', 'GSM', '17623623040', 'GSM', '16', '3.5', 'A B B C C O O A A B B C C O O A A B B C C O O A A B B C C O O', []],
  13: ['Lven Ding 丁相斌', '000277', 'GSS', '18501377720', 'GSS', '16', '0', 'A A B B O O O O A A B B C C O O A A B B C C O O A A C C O O O', []],
  14: ['Rose Peng 彭晓露', '000310', 'GSA', '17685187531', 'GSA', '0', '0', 'A A B B C C O O A A B PH C C O O O O B B B B C O O O B B B B C', [16, 17]],
  15: ['Winni Wang 王晶晶', '000308', 'GSA', '16684731209', 'GSA', '0', '0', 'O O A A B B C C O O A A B B C C O O A A B B C C O O A B C C O', []],
  16: ['Alice Zhu 朱春艳', '000273', 'GSA', '19110882240', 'GSA', '16', '0', 'F C O O A A B B CL CL O PH A A B B C C O O F F B B C C O O O O A', []],
  17: ['Ethan Zhao 赵梓淇', '000036', 'CON', '15521010536', 'CON', '10', '2', 'B B C AL AL A A A B B F PH O O A A B B C O O', []],
  18: ['Kimi Yuan 袁宇嵘鸣', '000285', 'Trainee', '15180859212', 'Trainee', '0', '0', 'O F F C C O F F C C O PH O O B B B B O O A A F F F O O A A A B', [0, 10, 11]],
  19: ['Lena Tan 谭玲丽', '000279', 'Trainee', '19117661732', 'Trainee', '0', '0', 'C O O F F C O O F F C C O O F F F F F C O O A A B B B O B B C', []]
};
const BANDS = { 7: 'GSM (KWEAP)', 12: 'Front Desk (KWEAP）', 20: '' };
const SHIFTS = ['07003 A (07:00 — 03:30', '14301 B (02:30 — 23:00', '23003 C (11:00 — 07:30', '07007 D (07:00 — 07:00', '10003 E (07:00 — 07:00', '11007 F (11:00 — 08:00', '20003 G (08:00 — 06:00', '12008 H (12:00 — 21:00'];

const CLIP = '<svg width="17" height="17" viewBox="0 0 17 17"><path d="M1 2h11v13H1z" fill="#eec67d"/><path d="M4 0h5v4H4z" fill="#666"/><path d="M8.500 6.500h5l3 3v7h-8z" fill="#fff" stroke="#666"/></svg>';
const FLASH = '<svg width="18" height="18" viewBox="0 0 18 18"><path d="M4.500 3.500h12v13h-11v-4" fill="#fff" stroke="#666"/><path d="M5 0L1 7h3l-2 6 6-8H5l3-5z" fill="#eec67d"/><path d="M9 6h3v2H9z" fill="#d9623f"/><path d="M7 10h6v2H7zM10 14h4v-1h-4z" fill="#3f7cbf"/></svg>';
const OVERLAYS = {
  '13-4': '<i class="mark"></i>',
  '13-5': '<button class="pick" aria-label="列表"><i class="dd"></i></button>',
  '13-6': '<i class="ants"></i>',
  '14-4': `<button class="ctrl">${CLIP}(Ctrl)<i class="dd"></i></button>`,
  '14-8': `<button class="quickan" aria-label="快速分析">${FLASH}</button>`
};

const off = '<td class="off ao"></td><td class="off"></td>';
const row = (n, h, cells) => `<tr class="r${n}" style="height:${h}px"><th class="rn${n === 13 ? ' hot' : ''}">${n < 21 ? n : ''}</th>${cells}${off}</tr>`;

function dates(kind) {
  return FORECAST.map((f, i) => {
    const d = new Date(2025, 11, 21 + i);
    const hol = i === HOLIDAY ? ' holiday' : '';
    if (kind === 'day') {
      const rest = d.getDay() % 6 === 0 ? ' rest' : '';
      return `<th class="day${hol || rest}">${DAYS[d.getDay()]}</th>`;
    }
    if (kind === 'date') return `<th class="date${hol}">${d.getDate()}-${d.getMonth() ? 'Dec' : 'Jan'}</th>`;
    return `<td class="fc5${CHECKED.includes(i) ? ' err' : ''}">${f}</td>`;
  }).join('');
}

function staff(n, [name, id, pos, tel, remark, ot, al, shifts, notes]) {
  const days = shifts.split(' ').map((s, i) => {
    const over = OVERLAYS[`${n}-${i}`] || '';
    const cls = ['s', s, notes.includes(i) && 'note', over && 'host', n === 13 && i === 5 && 'shade'].filter(Boolean).join(' ');
    return `<td class="${cls}">${s}${over}</td>`;
  });
  const left = 31 - days.length;
  return row(n, 32, `<td>${name}</td><td class="err">${id}</td><td>${pos}</td><td>${tel}</td><td class="rk">${remark}</td><td class="nb">${ot}</td><td class="nb">${al}</td>${days.join('')}${left ? `<td class="leave" colspan="${left}"></td>` : ''}`);
}

const widths = COLS.map((c, i) => c === 'AO' || c === 'AP' ? 55 : WIDTHS[i] || 40);
let html = `<colgroup><col style="width:23px">${widths.map(w => `<col style="width:${w}px">`).join('')}</colgroup>`;
html += `<tr class="colhead"><th class="corner"></th>${COLS.map(c => `<th${c === 'N' || c === 'O' ? ' class="hot"' : ''}>${c}</th>`).join('')}</tr>`;
html += row(1, 87, '<th class="title" colspan="38">ROOMS-FO Monthly Duty Roster- March 2025<span>房务部-前厅月度排班表(2025-11月)</span></th>');
html += row(2, 42, '<th class="cap" colspan="5">Period</th><th class="cap" colspan="2">Up.</th>' +
  [['1st Week 第一周', 8], ['2nd Week 第二周', 7], ['3rd Week 第三周', 7], ['4th Week 第四周', 7], ['5th Week 第五周', 2]]
    .map(([t, s], i) => `<th class="wk wk${i + 1}" colspan="${s}">${t}</th>`).join(''));
html += row(3, 34, ['Name of Staff<br>员工姓名', 'Employee ID<br>员工号', 'Position<br>职位', 'Contact No.<br>联系方式', 'Remark<br>备注'].map(t => `<th class="hd" rowspan="2">${t}</th>`).join('') +
  '<th class="hd" rowspan="3">OT<br>小时</th><th class="hd" rowspan="3">AL<br>天数</th>' + dates('day'));
html += row(4, 38, dates('date'));
html += row(5, 34, '<th class="hd" colspan="4">KWEAP-HI Rooms Forecast</th><th></th>' + dates('forecast'));
for (let n = 6; n <= 20; n++) {
  html += STAFF[n] ? staff(n, STAFF[n]) : row(n, n === 20 ? 30 : 32, `<th class="band" colspan="38">${BANDS[n]}</th>`);
}
html += row(21, 60, `<td class="remark" colspan="38"><em>Shift Remark （ KWEAP):</em>${SHIFTS.map(s => `<span>${s} &nbsp; ),</span>`).join('')}</td>`);
document.getElementById('roster').innerHTML = html;
```
